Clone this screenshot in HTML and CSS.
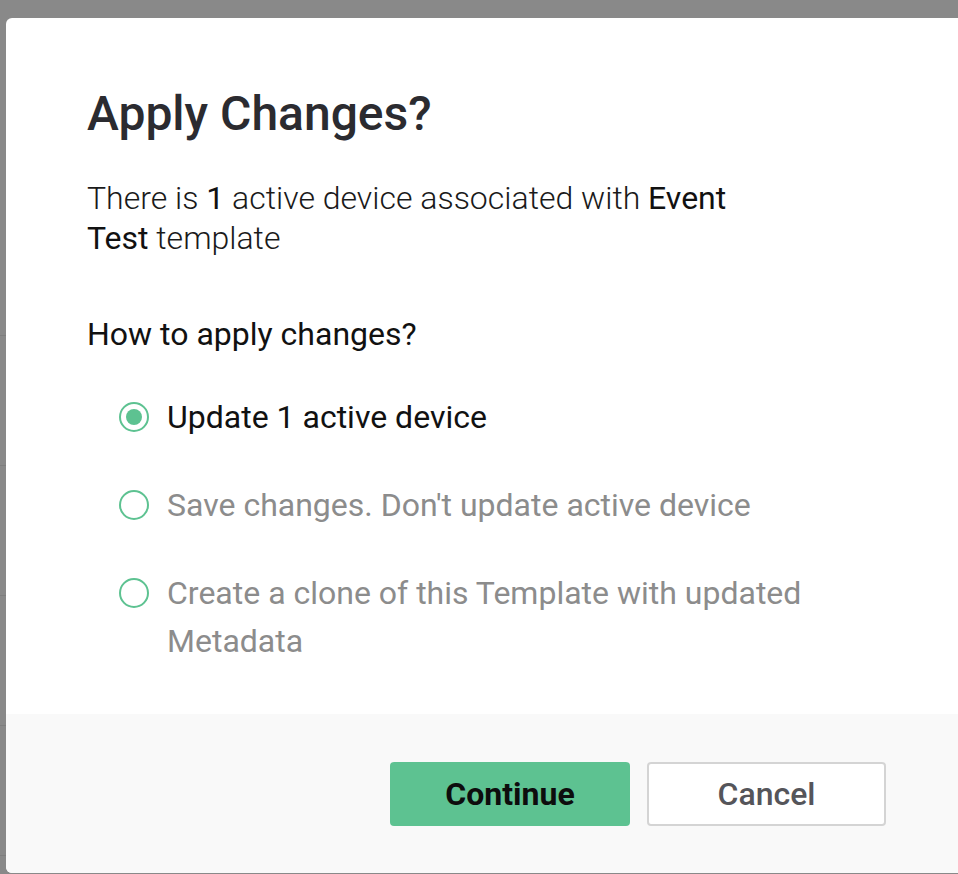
FILE: index.html
```html
<!DOCTYPE html>
<html lang="en">
<head>
<meta charset="utf-8">
<title>Apply Changes?</title>
<link rel="stylesheet" href="styles.css">
</head>
<body>
<div class="backdrop">
  <div class="bg-row"></div>
  <div class="bg-row"></div>
  <div class="bg-row"></div>
  <div class="bg-row"></div>
  <div class="bg-row"></div>
</div>
<div class="modal" role="dialog">
  <div class="modal-body">
    <h1 class="title">Apply Changes?</h1>
    <p class="desc">There is <span class="strong">1</span> active device associated with <span class="strong">Event<br>Test</span> template</p>
    <p class="question">How to apply changes?</p>
    <div class="options">
      <label class="option checked"><span class="radio"><span class="dot"></span></span><span class="label">Update 1 active device</span></label>
      <label class="option"><span class="radio"></span><span class="label">Save changes. Don't update active device</span></label>
      <label class="option"><span class="radio"></span><span class="label">Create a clone of this Template with updated<br>Metadata</span></label>
    </div>
  </div>
  <div class="modal-footer">
    <button class="btn btn-primary">Continue</button>
    <button class="btn btn-secondary">Cancel</button>
  </div>
</div>
</body>
</html>
```
FILE: styles.css
```css
html, body {
  margin: 0;
  padding: 0;
  width: 958px;
  height: 874px;
  overflow: hidden;
  background: #898989;
  font-family: Roboto, "Liberation Sans", sans-serif;
}
.backdrop {
  padding-top: 206px;
}
.bg-row {
  height: 129px;
  border-bottom: 1px solid #7e7e7e;
}
.modal {
  position: absolute;
  left: 6px;
  top: 18px;
  width: 966px;
  height: 855px;
  background: #ffffff;
  border-radius: 6px;
  display: flex;
  flex-direction: column;
  overflow: hidden;
}
.modal-body {
  flex: 1;
  padding: 66px 81px 0 81px;
}
.title {
  margin: 0;
  font-size: 48px;
  line-height: 60px;
  font-weight: 500;
  color: #2b2b30;
}
.desc {
  margin: 34px 0 0;
  font-size: 32px;
  line-height: 40px;
  font-weight: 300;
  color: #1a1a1a;
}
.strong {
  font-weight: 400;
  color: #111;
}
.question {
  margin: 56px 0 0;
  font-size: 32px;
  line-height: 40px;
  font-weight: 400;
  color: #111;
}
.options {
  margin: 39px 0 0 32px;
  display: flex;
  flex-direction: column;
  gap: 40px;
}
.option {
  display: flex;
  align-items: flex-start;
  font-size: 32px;
  line-height: 48px;
  color: #8c8c8c;
}
.option.checked {
  color: #111;
}
.radio {
  flex: none;
  box-sizing: border-box;
  width: 30px;
  height: 30px;
  margin-top: 9px;
  margin-right: 18px;
  border: 2px solid #5dc291;
  border-radius: 50%;
  display: flex;
  align-items: center;
  justify-content: center;
}
.dot {
  width: 16px;
  height: 16px;
  border-radius: 50%;
  background: #5dc291;
}
.modal-footer {
  height: 159px;
  box-sizing: border-box;
  background: #f9f9f9;
  display: flex;
  justify-content: flex-end;
  align-items: flex-start;
  gap: 17px;
  padding: 48px 86px 0 0;
}
.btn {
  box-sizing: border-box;
  width: 240px;
  height: 64px;
  border-radius: 4px;
  font-family: Roboto, "Liberation Sans", sans-serif;
  font-size: 32px;
  cursor: pointer;
}
.btn-primary {
  background: #5dc291;
  border: none;
  color: #0d0d0d;
  font-weight: 700;
}
.btn-secondary {
  width: 239px;
  background: #ffffff;
  border: 2px solid #d4d4d4;
  color: #55555a;
  font-weight: 500;
}
```
